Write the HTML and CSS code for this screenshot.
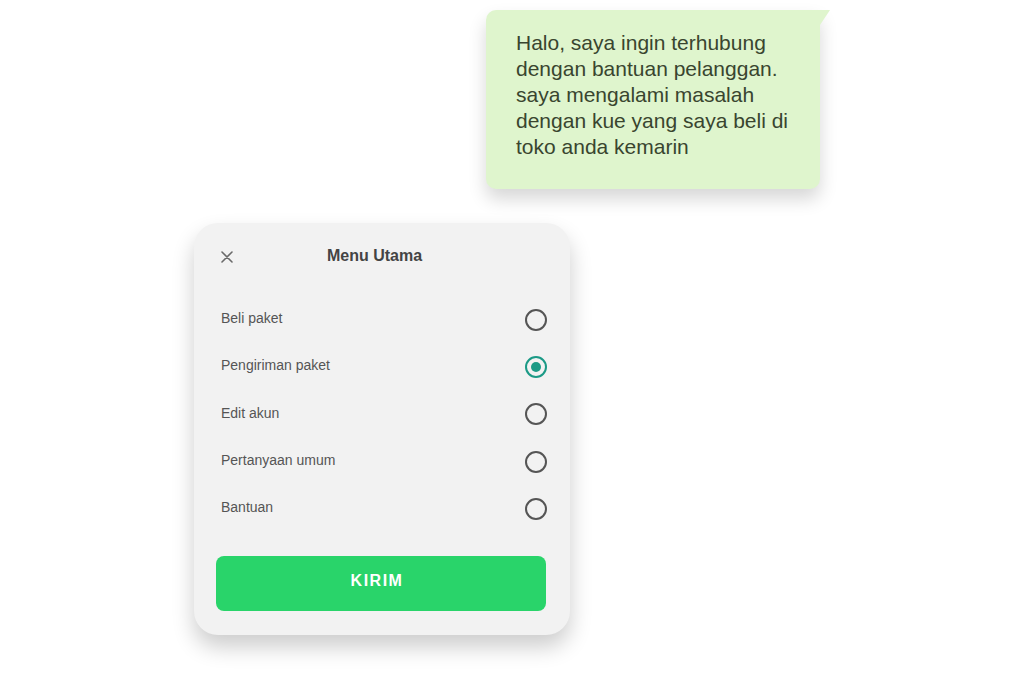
FILE: index.html
```html
<!DOCTYPE html>
<html lang="id">
<head>
<meta charset="utf-8">
<title>Menu Utama</title>
<link rel="stylesheet" href="styles.css">
</head>
<body>
<div class="page">
  <div class="bubble">
    <p class="bubble-text">Halo, saya ingin terhubung dengan bantuan pelanggan. saya mengalami masalah dengan kue yang saya beli di toko anda kemarin</p>
  </div>
  <div class="card">
    <div class="card-header">
      <svg class="close" width="12" height="12" viewBox="0 0 12 12"><path d="M1 1L11 11M11 1L1 11" stroke="#6a6a6a" stroke-width="1.6" stroke-linecap="round"/></svg>
      <h1 class="title">Menu Utama</h1>
    </div>
    <ul class="options">
      <li class="option"><span class="label">Beli paket</span><span class="radio"></span></li>
      <li class="option"><span class="label">Pengiriman paket</span><span class="radio checked"></span></li>
      <li class="option"><span class="label">Edit akun</span><span class="radio"></span></li>
      <li class="option"><span class="label">Pertanyaan umum</span><span class="radio"></span></li>
      <li class="option"><span class="label">Bantuan</span><span class="radio"></span></li>
    </ul>
    <button class="submit">KIRIM</button>
  </div>
</div>
</body>
</html>
```
FILE: styles.css
```css
html, body {
  margin: 0;
  padding: 0;
  background: #ffffff;
  font-family: "Liberation Sans", Arial, sans-serif;
}
.page {
  display: flex;
  flex-direction: column;
  align-items: flex-start;
  width: 1024px;
  height: 683px;
  overflow: hidden;
}
.bubble {
  position: relative;
  margin: 10px 0 0 486px;
  width: 334px;
  box-sizing: border-box;
  padding: 20px 18px 29px 30px;
  background: #dff5cd;
  border-radius: 10px 0 10px 10px;
  box-shadow: 0 10px 18px rgba(0, 0, 0, 0.16);
}
.bubble::after {
  content: "";
  position: absolute;
  top: 0;
  right: -10px;
  width: 0;
  height: 0;
  border-top: 15px solid #dff5cd;
  border-right: 10px solid transparent;
}
.bubble-text {
  margin: 0;
  font-size: 21px;
  line-height: 26px;
  color: #39452f;
}
.card {
  margin: 34px 0 0 194px;
  width: 376px;
  box-sizing: border-box;
  padding: 22px 23px 24px 22px;
  background: #f2f2f2;
  border-radius: 24px;
  box-shadow: 0 12px 22px rgba(0, 0, 0, 0.2);
  display: flex;
  flex-direction: column;
}
.card-header {
  position: relative;
  height: 22px;
  display: flex;
  align-items: center;
  justify-content: center;
  padding-right: 14px;
}
.close {
  position: absolute;
  left: 5px;
  top: 6px;
}
.title {
  margin: 0;
  font-size: 16px;
  font-weight: bold;
  color: #444;
  line-height: 22px;
}
.options {
  list-style: none;
  margin: 29px 0 0 0;
  padding: 0;
}
.option {
  height: 47.3px;
  display: flex;
  align-items: center;
  justify-content: space-between;
  padding-left: 5px;
}
.label {
  font-size: 14px;
  color: #555;
  margin-top: -3px;
}
.radio {
  width: 18px;
  height: 18px;
  border: 2px solid #555;
  border-radius: 50%;
  box-sizing: content-box;
  position: relative;
}
.radio.checked {
  border-color: #1b9a86;
}
.radio.checked::after {
  content: "";
  position: absolute;
  left: 4px;
  top: 4px;
  width: 10px;
  height: 10px;
  border-radius: 50%;
  background: #1b9a86;
}
.submit {
  flex-shrink: 0;
  margin-top: 24px;
  height: 55px;
  width: 330px;
  border: none;
  border-radius: 8px;
  background: #29d46a;
  color: #fff;
  font-family: "Liberation Sans", Arial, sans-serif;
  font-size: 16px;
  font-weight: bold;
  letter-spacing: 1.5px;
  padding: 0 8px 6px 0;
}
```
